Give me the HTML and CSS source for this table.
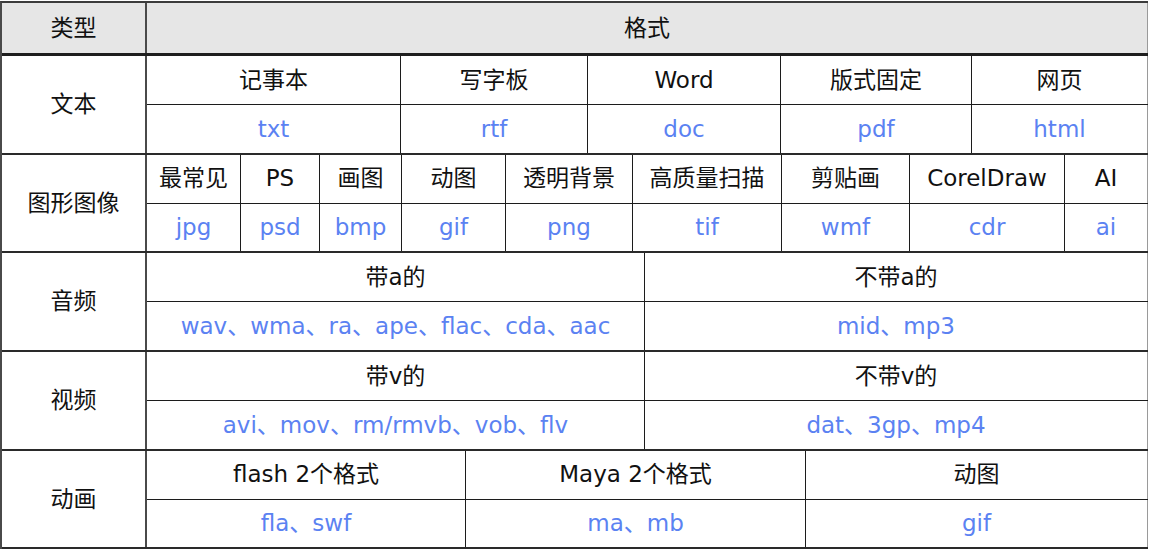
FILE: index.html
```html
<!DOCTYPE html>
<html lang="zh">
<head>
<meta charset="utf-8">
<title>文件格式</title>
<link rel="stylesheet" href="styles.css">
</head>
<body>
<div class="table">
  <div class="head">
    <div class="cell type">类型</div>
    <div class="cell fmt">格式</div>
  </div>

  <div class="group g99">
    <div class="cell type">文本</div>
    <div class="body">
      <div class="sub top cols-text">
        <div class="cell">记事本</div><div class="cell">写字板</div><div class="cell">Word</div><div class="cell">版式固定</div><div class="cell last">网页</div>
      </div>
      <div class="sub cols-text">
        <div class="cell ext">txt</div><div class="cell ext">rtf</div><div class="cell ext">doc</div><div class="cell ext">pdf</div><div class="cell ext last">html</div>
      </div>
    </div>
  </div>

  <div class="group g98">
    <div class="cell type">图形图像</div>
    <div class="body">
      <div class="sub top cols-img">
        <div class="cell">最常见</div><div class="cell">PS</div><div class="cell">画图</div><div class="cell">动图</div><div class="cell">透明背景</div><div class="cell">高质量扫描</div><div class="cell">剪贴画</div><div class="cell">CorelDraw</div><div class="cell last">AI</div>
      </div>
      <div class="sub cols-img">
        <div class="cell ext">jpg</div><div class="cell ext">psd</div><div class="cell ext">bmp</div><div class="cell ext">gif</div><div class="cell ext">png</div><div class="cell ext">tif</div><div class="cell ext">wmf</div><div class="cell ext">cdr</div><div class="cell ext last">ai</div>
      </div>
    </div>
  </div>

  <div class="group g99">
    <div class="cell type">音频</div>
    <div class="body">
      <div class="sub top cols-two">
        <div class="cell">带a的</div><div class="cell last">不带a的</div>
      </div>
      <div class="sub cols-two">
        <div class="cell ext">wav、wma、ra、ape、flac、cda、aac</div><div class="cell ext last">mid、mp3</div>
      </div>
    </div>
  </div>

  <div class="group g99">
    <div class="cell type">视频</div>
    <div class="body">
      <div class="sub top cols-two">
        <div class="cell">带v的</div><div class="cell last">不带v的</div>
      </div>
      <div class="sub cols-two">
        <div class="cell ext">avi、mov、rm/rmvb、vob、flv</div><div class="cell ext last">dat、3gp、mp4</div>
      </div>
    </div>
  </div>

  <div class="group g98">
    <div class="cell type">动画</div>
    <div class="body">
      <div class="sub top cols-anim">
        <div class="cell">flash 2个格式</div><div class="cell">Maya 2个格式</div><div class="cell last">动图</div>
      </div>
      <div class="sub cols-anim">
        <div class="cell ext">fla、swf</div><div class="cell ext">ma、mb</div><div class="cell ext last">gif</div>
      </div>
    </div>
  </div>
</div>
</body>
</html>
```

FILE: styles.css
```css
* { box-sizing: border-box; }
html, body { margin: 0; padding: 0; background: #ffffff; }
body {
  font-family: "DejaVu Sans", "Noto Sans CJK SC", sans-serif;
  font-size: 23px;
  color: #111111;
}
.table {
  width: 1148px;
  margin-top: 1px;
  border-top: 2px solid #3c3c3c;
  border-left: 2px solid #4a4a4a;
}
.cell {
  display: flex;
  align-items: center;
  justify-content: center;
  white-space: nowrap;
  border-right: 1px solid #1c1c1c;
  line-height: 1;
}
.cell.last { border-right: 1px solid #9a9a9a; }
.head {
  display: flex;
  height: 53px;
  background: #e6e6e6;
  border-bottom: 3px solid #1e1e1e;
}
.head .type { width: 145px; border-right: 2px solid #4a4a4a; }
.head .fmt { flex: 1; border-right: 1px solid #9a9a9a; }
.group {
  display: flex;
  border-bottom: 2px solid #2a2a2a;
}
.g99 { height: 99px; }
.g98 { height: 98px; }
.group > .type {
  width: 145px;
  border-right: 2px solid #4a4a4a;
}
.body {
  flex: 1;
  display: flex;
  flex-direction: column;
}
.sub {
  flex: 1;
  display: grid;
}
.sub.top { border-bottom: 1px solid #1c1c1c; }
.ext { color: #5b82f2; }
.cols-text { grid-template-columns: 254px 187px 193px 191px 1fr; }
.cols-img { grid-template-columns: 94px 79px 82px 104px 127px 149px 128px 155px 1fr; }
.cols-two { grid-template-columns: 498px 1fr; }
.cols-anim { grid-template-columns: 319px 340px 1fr; }
```
